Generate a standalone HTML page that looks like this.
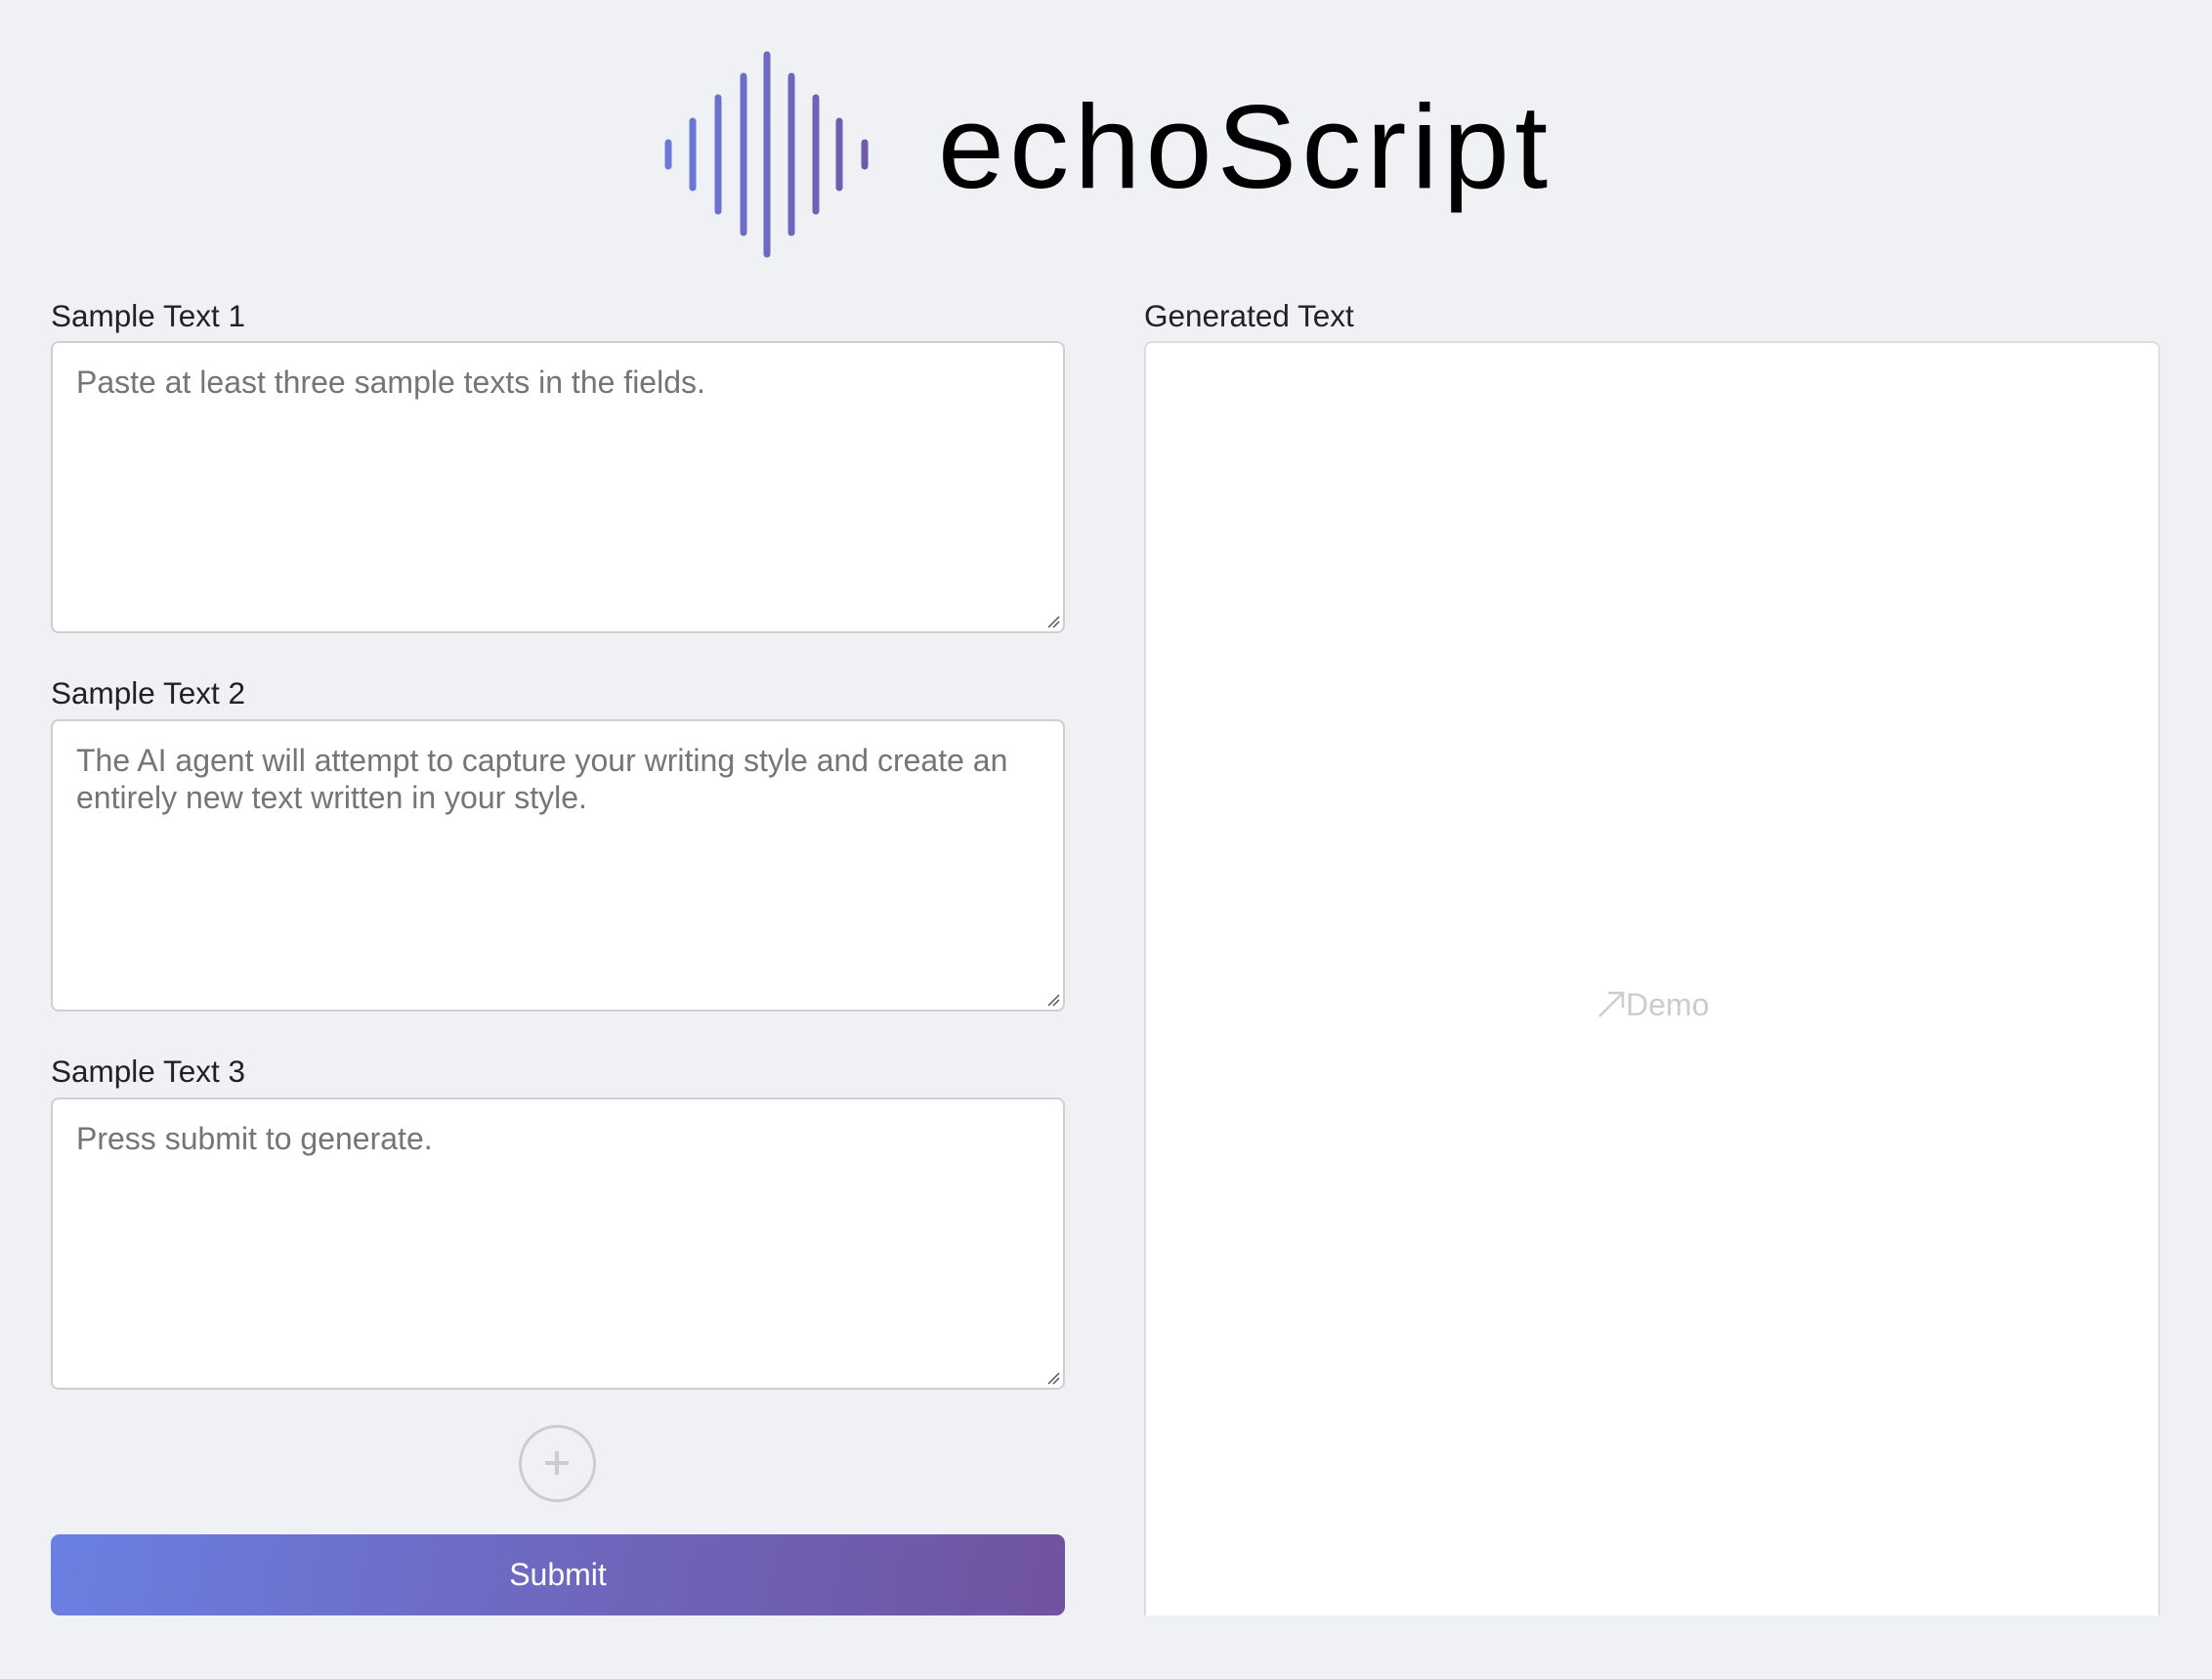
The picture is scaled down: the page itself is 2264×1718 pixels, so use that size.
<!DOCTYPE html>
<html><head><meta charset="utf-8"><style>
*{box-sizing:border-box;margin:0;padding:0}
body{width:2264px;height:1718px;background:#f0f1f5;font-family:"Liberation Sans",sans-serif;position:relative;overflow:hidden}
.lbl{position:absolute;font-size:31.5px;color:#222;line-height:36px}
.ta{position:absolute;left:52px;width:1038px;height:299px;background:#fff;border:2px solid #cfcfcf;border-radius:8px;padding:22px 24px;font-size:32px;line-height:37.5px;color:#757575}
.grip{position:absolute;right:3px;bottom:3px;width:14px;height:14px}
</style></head><body>
<svg style="position:absolute;left:670px;top:50px" width="230" height="220">
<defs><linearGradient id="g" gradientUnits="userSpaceOnUse" x1="0" y1="0" x2="230" y2="0"><stop offset="0" stop-color="#6a7bdb"/><stop offset="1" stop-color="#6f58a8"/></linearGradient></defs>
<g stroke="url(#g)" stroke-width="7" stroke-linecap="round">
<line x1="14" y1="96" x2="14" y2="120"/>
<line x1="39" y1="74" x2="39" y2="142"/>
<line x1="65" y1="50" x2="65" y2="166"/>
<line x1="91" y1="28" x2="91" y2="188"/>
<line x1="115" y1="6" x2="115" y2="210"/>
<line x1="140" y1="28" x2="140" y2="188"/>
<line x1="165" y1="50" x2="165" y2="166"/>
<line x1="189" y1="74" x2="189" y2="142"/>
<line x1="215" y1="96" x2="215" y2="120"/>
</g></svg>
<div style="position:absolute;left:960px;top:80px;font-size:122px;line-height:140px;letter-spacing:5.3px;color:#000">echoScript</div>

<div class="lbl" style="left:52px;top:305px">Sample Text 1</div>
<div class="ta" style="top:349px">Paste at least three sample texts in the fields.<svg class="grip" viewBox="0 0 14 14"><path d="M2 13L13 2M7 13L13 7" stroke="#555" stroke-width="1.5"/></svg></div>
<div class="lbl" style="left:52px;top:691px">Sample Text 2</div>
<div class="ta" style="top:736px">The AI agent will attempt to capture your writing style and create an entirely new text written in your style.<svg class="grip" viewBox="0 0 14 14"><path d="M2 13L13 2M7 13L13 7" stroke="#555" stroke-width="1.5"/></svg></div>
<div class="lbl" style="left:52px;top:1078px">Sample Text 3</div>
<div class="ta" style="top:1123px">Press submit to generate.<svg class="grip" viewBox="0 0 14 14"><path d="M2 13L13 2M7 13L13 7" stroke="#555" stroke-width="1.5"/></svg></div>

<div style="position:absolute;left:531px;top:1458px;width:79px;height:79px;border:3px solid #ccc;border-radius:50%"></div>
<div style="position:absolute;left:558px;top:1495px;width:24px;height:4px;background:#ccc"></div>
<div style="position:absolute;left:568px;top:1485px;width:4px;height:24px;background:#ccc"></div>

<div style="position:absolute;left:52px;top:1570px;width:1038px;height:83px;border-radius:9px;background:linear-gradient(100deg,#6a80e2,#6d6cc5 40%,#7053a0);color:#fff;font-size:32px;text-align:center;line-height:83px">Submit</div>

<div class="lbl" style="left:1171px;top:305px">Generated Text</div>
<div style="position:absolute;left:1171px;top:349px;width:1040px;height:1304px;background:#fff;border:2px solid #ddd;border-bottom:none;border-radius:8px 8px 0 0"></div>
<svg style="position:absolute;left:1634px;top:1013px" width="30" height="30"><path d="M3 27L27 3M12 3H27V18" stroke="#ccc" stroke-width="2.5" fill="none"/></svg>
<div style="position:absolute;left:1664px;top:1010px;font-size:32px;line-height:36px;color:#ccc">Demo</div>
</body></html>
